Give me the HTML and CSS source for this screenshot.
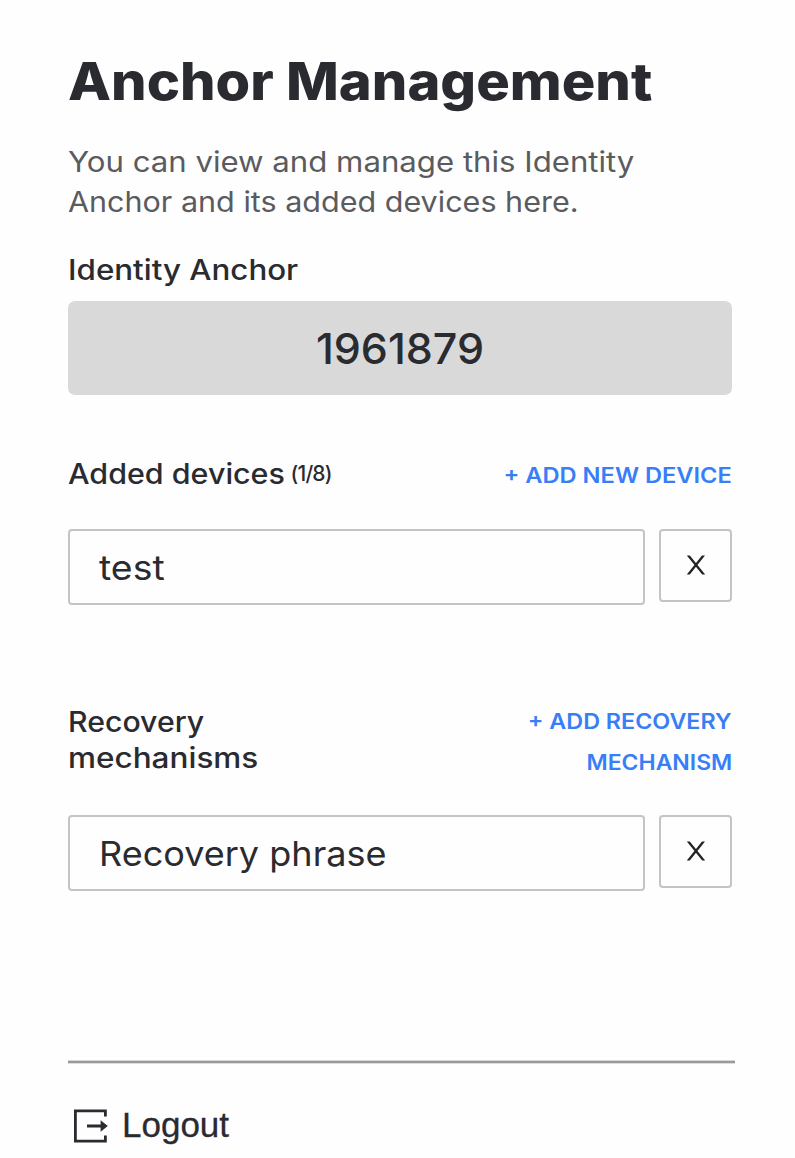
FILE: index.html
```html
<!DOCTYPE html>
<html lang="en">
<head>
<meta charset="utf-8">
<title>Anchor Management</title>
<link rel="stylesheet" href="styles.css">
</head>
<body>
<main class="page">
  <h1 class="title"><span class="wide">Anchor Management</span></h1>
  <p class="intro"><span class="wide intro-a">You can view and manage this Identity</span><br><span class="wide intro-b">Anchor and its added devices here.</span></p>
  <h2 class="label label-anchor"><span class="wide">Identity Anchor</span></h2>
  <output class="anchor"><span>1961879</span></output>

  <section class="devices">
    <header class="section-head">
      <h2 class="label label-devices"><span class="wide">Added devices</span><small class="count">(1/8)</small></h2>
      <button class="link link-device"><span class="wide">+ ADD NEW DEVICE</span></button>
    </header>
    <div class="item">
      <div class="name name-test"><span class="wide">test</span></div>
      <button class="remove" aria-label="Remove test"><svg viewBox="0 0 20 20"><path d="M.8.4h3L19.2 19.6h-3zM16 .4h3L3.8 19.6h-3z"/></svg></button>
    </div>
  </section>

  <section class="recovery">
    <header class="section-head">
      <h2 class="label"><span class="wide rec-a">Recovery</span><br><span class="wide rec-b">mechanisms</span></h2>
      <button class="link link-recovery"><span class="wide link-a">+ ADD RECOVERY</span><br><span class="wide link-b">MECHANISM</span></button>
    </header>
    <div class="item">
      <div class="name name-phrase"><span class="wide">Recovery phrase</span></div>
      <button class="remove" aria-label="Remove recovery phrase"><svg viewBox="0 0 20 20"><path d="M.8.4h3L19.2 19.6h-3zM16 .4h3L3.8 19.6h-3z"/></svg></button>
    </div>
  </section>

  <footer class="footer">
    <button class="logout">
      <svg class="logout-icon" viewBox="0 0 34 34"><path d="M31.4 7.4V1.8H1.4v30.4h30v-5.6" fill="none" stroke="#2a2b30" stroke-width="2.8"/><path d="M13 17h15" stroke="#2a2b30" stroke-width="3"/><path d="M26.6 11.2l7.2 5.8-7.2 5.8z" fill="#2a2b30"/></svg>
      <span class="logout-text">Logout</span>
    </button>
  </footer>
</main>
</body>
</html>
```
FILE: styles.css
```css
* { box-sizing: border-box; }
body { margin: 0; background: #fefefe; color: #2a2b30; font-family: Inter, "Liberation Sans", sans-serif; }
h1, h2, p { margin: 0; white-space: nowrap; }
button { padding: 0; border: 0; background: none; font-family: inherit; color: inherit; }
/* Extended letterforms: each line is widened from its own edge. */
.wide { display: inline-block; transform: scaleX(var(--stretch, 1.1)); transform-origin: left; }
.page { width: 795px; height: 1158px; padding: 51px 63px 0 68px; overflow: hidden; }
.title { --stretch: 1.077; font-size: 52px; line-height: 62px; font-weight: 800; }
.intro { margin-top: 29px; font-size: 28px; line-height: 40px; color: #5a5b5f; }
.intro-a { --stretch: 1.113; }
.intro-b { --stretch: 1.09; }
.label { font-size: 28px; line-height: 36px; font-weight: 500; }
.label-anchor { --stretch: 1.118; margin-top: 30px; }
.anchor { display: flex; align-items: center; justify-content: center; height: 94px; margin-top: 13px; border-radius: 7px; background: #d9d9d9; font-size: 43px; font-weight: 550; }
.section-head { display: flex; justify-content: space-between; align-items: center; }
.devices { margin-top: 60px; }
.devices .section-head { height: 38px; }
.label-devices { --stretch: 1.087; display: flex; }
.count { margin-left: 23px; font-size: 21px; font-weight: 500; letter-spacing: -.8px; }
.link { font-size: 21px; line-height: 41px; font-weight: 600; color: #387ff7; text-align: right; white-space: nowrap; }
.link .wide { transform-origin: right; }
.link-device { --stretch: 1.126; padding-top: 2px; }
.link-a { --stretch: 1.11; }
.link-b { --stretch: 1.094; }
.item { display: flex; align-items: flex-start; gap: 14px; }
.devices .item { margin-top: 36px; }
.name { display: flex; align-items: center; width: 577px; height: 76px; padding: 0 0 0 29px; border: 2px solid #c4c4c4; border-radius: 4px; font-size: 34px; white-space: nowrap; }
.name-phrase { --stretch: 1.06; }
.remove { display: flex; align-items: center; justify-content: center; width: 73px; height: 73px; padding-bottom: 1px; border: 2px solid #c4c4c4; border-radius: 4px; }
.remove svg { width: 20px; height: 20px; fill: #222; }
.recovery { margin-top: 96px; }
.recovery .section-head { height: 82px; }
.recovery .label { padding-bottom: 4px; }
.rec-a { --stretch: 1.08; }
.rec-b { --stretch: 1.125; }
.recovery .item { margin-top: 32px; }
.footer { width: 667px; margin-top: 169px; border-top: 1px solid #d8d8d8; }
.footer::before { content: ""; display: block; height: 2px; background: #999; border-bottom: 1px solid #ddd; }
.logout { display: flex; align-items: center; gap: 14px; margin: 41px 0 0 6px; font: 35px/40px "Liberation Sans", sans-serif; }
.logout-icon { width: 34px; height: 34px; }
.logout-text { padding-bottom: 2px; -webkit-text-stroke: .3px currentColor; }
```
